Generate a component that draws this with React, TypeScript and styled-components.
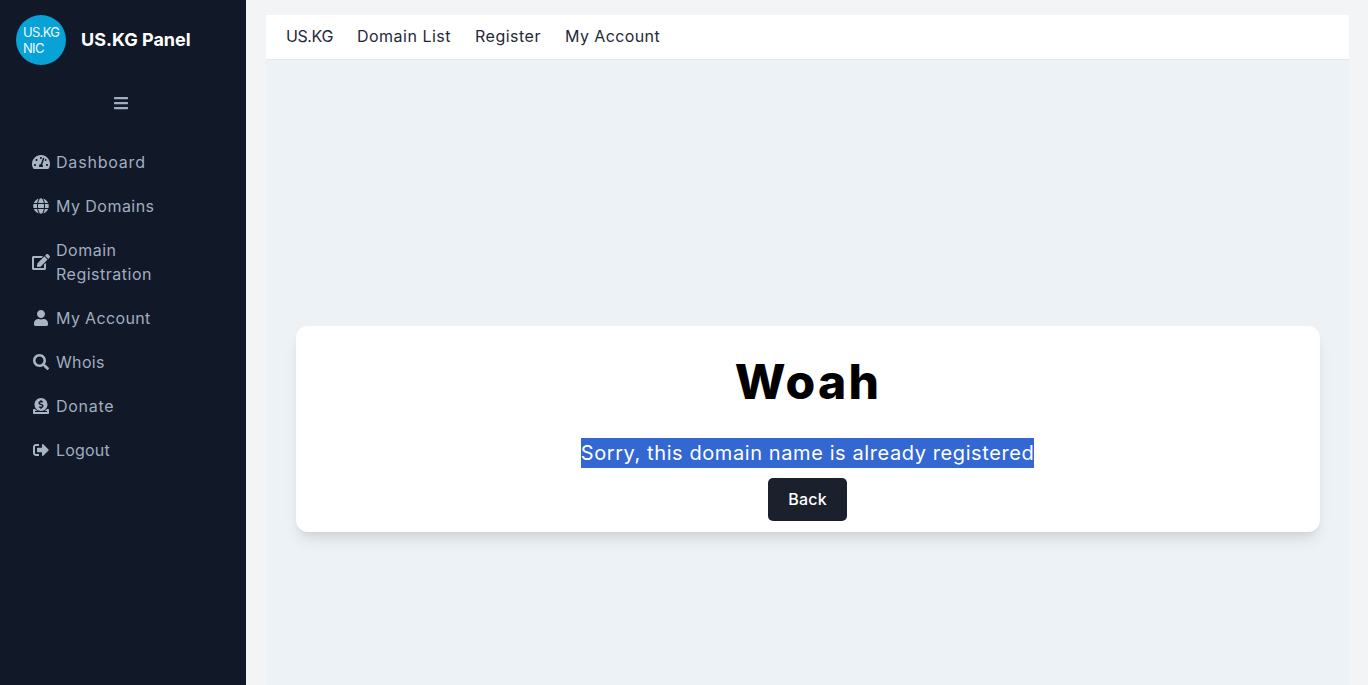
import React from "react";
import styled, { createGlobalStyle } from "styled-components";
import { FaBars, FaTachometerAlt, FaGlobe, FaEdit, FaUser, FaSearch, FaDonate, FaSignOutAlt } from "react-icons/fa";

const Global = createGlobalStyle`
  html, body { margin: 0; padding: 0; height: 100%; overflow: hidden; }
  body { background: #f3f4f6; font-family: Inter, "Noto Sans", sans-serif; }
  #root { height: 100%; }
`;

const Shell = styled.div`
  display: flex;
  width: 1368px;
  height: 685px;
  overflow: hidden;
`;

const Sidebar = styled.aside`
  flex: 0 0 246px;
  background: #111827;
  display: flex;
  flex-direction: column;
`;

const Brand = styled.div`
  display: flex;
  align-items: center;
  gap: 15px;
  padding: 15px 16px 0;
`;

const Logo = styled.div`
  width: 50px;
  height: 50px;
  border-radius: 50%;
  background: #09a2d6;
  color: #f0f9ff;
  font-size: 13px;
  line-height: 16px;
  letter-spacing: -0.7px;
  padding: 9px 0 0 7px;
  box-sizing: border-box;
`;

const BrandName = styled.div`
  color: #fff;
  font-size: 18px;
  font-weight: 700;
  letter-spacing: 0;
  padding-bottom: 2px;
`;

const Toggle = styled.div`
  display: flex;
  justify-content: center;
  color: #a0aec0;
  height: 16px;
  margin: 30px 0 29px -4px;
  font-size: 16px;
`;

const Nav = styled.nav`
  display: flex;
  flex-direction: column;
  padding: 0 32px;
`;

const NavItem = styled.a<{ $track: number }>`
  display: flex;
  align-items: center;
  gap: 6px;
  padding: 10px 0;
  color: #a0aec0;
  font-size: 16px;
  line-height: 24px;
  letter-spacing: ${(p) => p.$track}px;
  width: 150px;
`;

const IconSlot = styled.span<{ $size: number }>`
  flex: 0 0 18px;
  display: flex;
  justify-content: center;
  font-size: ${(p) => p.$size}px;
  color: #a9b4c4;
`;

const Main = styled.main`
  flex: 0 0 1083px;
  margin: 15px 0 0 20px;
  display: flex;
  flex-direction: column;
`;

const TopBar = styled.header`
  display: flex;
  gap: 24px;
  height: 42px;
  align-items: center;
  padding: 0 20px 2px;
  background: #fff;
  border-bottom: 1px solid #e5e7eb;
  flex-shrink: 0;
`;

const TopLink = styled.a<{ $track: number }>`
  color: #1f2937;
  font-size: 16px;
  letter-spacing: ${(p) => p.$track}px;
`;

const Content = styled.div`
  flex: 1;
  background: #edf2f7;
  padding: 266px 29px 0 30px;
`;

const Card = styled.section`
  background: #fff;
  border-radius: 12px;
  box-shadow: 0 10px 15px -3px rgba(0,0,0,.1), 0 4px 6px -2px rgba(0,0,0,.05);
  padding: 20px 0 11px;
  display: flex;
  flex-direction: column;
  align-items: center;
`;

const Title = styled.h1`
  margin: 0 0 20px;
  font-size: 48px;
  line-height: 72px;
  font-weight: 800;
  color: #000;
  letter-spacing: 2.3px;
`;

const Selected = styled.p`
  margin: 0 0 10px -1px;
  background: #3367d1;
  color: #fff;
  font-size: 20px;
  line-height: 30px;
  letter-spacing: 0.59px;
`;

const BackButton = styled.button`
  height: 43px;
  width: 79px;
  margin-right: 1px;
  padding: 0 0 2px;
  border: 0;
  border-radius: 5px;
  background: #1a202c;
  color: #fff;
  font: 500 16px Inter, sans-serif;
  letter-spacing: 0.2px;
`;

const items = [
  { icon: <FaTachometerAlt />, size: 18, track: 0.8, label: "Dashboard" },
  { icon: <FaGlobe />, size: 16, track: 0.45, label: "My Domains" },
  { icon: <FaEdit />, size: 18, track: 0.5, label: "Domain Registration" },
  { icon: <FaUser />, size: 16, track: 0.35, label: "My Account" },
  { icon: <FaSearch />, size: 16, track: 0.35, label: "Whois" },
  { icon: <FaDonate />, size: 16, track: 0.7, label: "Donate" },
  { icon: <FaSignOutAlt />, size: 16, track: 0.2, label: "Logout" },
];

const links = [
  { label: "US.KG", track: -0.4 },
  { label: "Domain List", track: 0.5 },
  { label: "Register", track: 0.5 },
  { label: "My Account", track: 0.4 },
];

export default function App() {
  return (
    <Shell>
      <Global />
      <Sidebar>
        <Brand>
          <Logo>US.KG<br />NIC</Logo>
          <BrandName>US.KG Panel</BrandName>
        </Brand>
        <Toggle><FaBars /></Toggle>
        <Nav>
          {items.map((it) => (
            <NavItem key={it.label} $track={it.track}>
              <IconSlot $size={it.size}>{it.icon}</IconSlot>
              <span>{it.label}</span>
            </NavItem>
          ))}
        </Nav>
      </Sidebar>
      <Main>
        <TopBar>
          {links.map((l) => (
            <TopLink key={l.label} $track={l.track}>{l.label}</TopLink>
          ))}
        </TopBar>
        <Content>
          <Card>
            <Title>Woah</Title>
            <Selected>Sorry, this domain name is already registered</Selected>
            <BackButton>Back</BackButton>
          </Card>
        </Content>
      </Main>
    </Shell>
  );
}
